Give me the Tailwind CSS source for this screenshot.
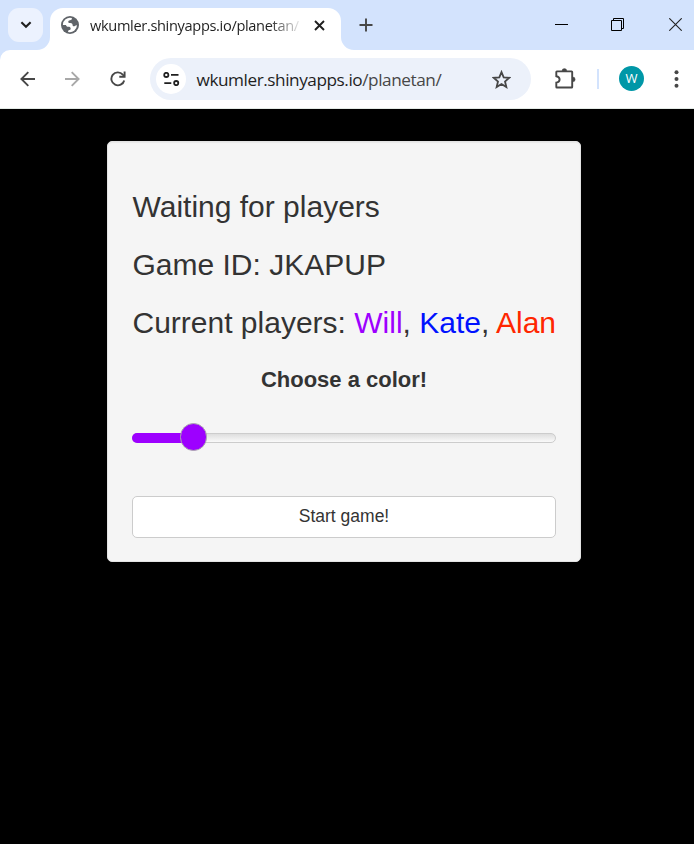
<!DOCTYPE html>
<html lang="en">
<head>
<meta charset="utf-8">
<title>planetan</title>
<script src="https://cdn.jsdelivr.net/npm/@tailwindcss/browser@4"></script>
</head>
<body class="bg-black w-[694px] h-[844px] overflow-hidden flex flex-col font-['Liberation_Sans',Arial,sans-serif] text-[#333]">
<header class="shrink-0 font-['Open_Sans','Noto_Sans',sans-serif]">
  <!-- Tab strip -->
  <div class="h-[50px] bg-[#d3e3fd] flex">
    <div class="w-[50px] flex relative">
      <button class="ml-2 mt-2 w-[35px] h-[34px] rounded-[11px] bg-[#ecf2fe] flex items-center justify-center">
        <svg width="12" height="8" viewBox="0 0 12 8" fill="none" stroke="#1f1f1f" stroke-width="2.1"><path d="M1.4 1.3 6 5.8l4.600-4.500"/></svg>
      </button>
      <svg class="absolute right-0 bottom-0" width="13" height="13" viewBox="0 0 13 13"><path d="M13 0v13H0A13 13 0 0 0 13 0z" fill="#fff"/></svg>
      <svg class="absolute left-0 -bottom-[10px]" width="10" height="10" viewBox="0 0 10 10"><path d="M0 0h10A10 10 0 0 0 0 10z" fill="#d3e3fd"/></svg>
    </div>
    <div class="mt-[8px] h-[42px] w-[290.500px] bg-white rounded-t-[13px] flex items-start pl-[11px]">
      <svg class="mt-[8px] shrink-0" width="18" height="18" viewBox="0 0 18 18"><circle cx="9" cy="9" r="9" fill="#5f6368"/><path d="M10.800 1.900c.4 1.500-.4 2.300-1.800 2.400-1.300.1-1.800.7-1.700 1.700.1.900.8 1.100 2 1.100 1.500 0 2.300.7 2.300 2 0 1.200.9 1.500 1.900 1.100.9-.4 1.600-1 2.500-.9A7.100 7.100 0 0 1 7.200 15.900c-.4-1.300.3-1.900 1.400-2 1-.1 1.200-.8 1-1.700-.2-1-1-1.300-2.300-1.400-1.400-.1-2.200-.7-2.300-1.800H1.900A7.100 7.100 0 0 1 10.800 1.900z" fill="#fff"/></svg>
      <div class="ml-[11px] mt-[6px] w-[210px] h-[22px] leading-[22px] text-[14.600px] tracking-[-0.340px] whitespace-nowrap overflow-hidden text-transparent bg-clip-text bg-linear-to-r from-[#1f1f1f] from-85% to-[#1f1f1f]/10">wkumler.shinyapps.io/planetan/</div>
      <svg class="mt-[12px] ml-[14px] shrink-0" width="11" height="11" viewBox="0 0 11 11" stroke="#1f1f1f" stroke-width="1.900"><path d="M1 1l9 9M10 1l-9 9"/></svg>
    </div>
    <div class="relative w-[49.500px]">
      <svg class="absolute left-0 bottom-0" width="13" height="13" viewBox="0 0 13 13"><path d="M0 0v13h13A13 13 0 0 1 0 0z" fill="#fff"/></svg>
      <svg class="ml-[18.500px] mt-[18px]" width="14" height="14" viewBox="0 0 14 14" stroke="#474747" stroke-width="1.900"><path d="M7 .5v13M.5 7h13"/></svg>
    </div>
    <svg class="ml-[165px] mt-[18px]" width="13" height="13" viewBox="0 0 13 13" stroke="#000"><path d="M0 6.500h13"/></svg>
    <svg class="ml-[43px] mt-[18px]" width="13" height="13" viewBox="0 0 13 13" fill="none" stroke="#000"><path d="M.5 2.500h10v10H.5zM2.500 2.500v-2h10v10h-2"/></svg>
    <svg class="ml-[45px] mt-[18px]" width="13" height="13" viewBox="0 0 13 13" stroke="#222" stroke-width="1.100"><path d="M.3.300l12.400 12.400M12.700.300.300 12.700"/></svg>
  </div>
  <!-- Toolbar -->
  <div class="h-[59px] bg-white border-b border-[#e3eae6] flex items-center pb-[1px]">
    <svg class="ml-5" width="15" height="16" viewBox="0 0 15 16" fill="none" stroke="#474747" stroke-width="1.900"><path d="M15 8H1.600M8.300 1.100 1.400 8l6.900 6.900"/></svg>
    <svg class="ml-[30px]" width="15" height="16" viewBox="0 0 15 16" fill="none" stroke="#a8a8a8" stroke-width="1.900"><path d="M0 8h13.400M6.700 1.100 13.600 8l-6.900 6.900"/></svg>
    <svg class="ml-[30px]" width="16" height="16" viewBox="0 0 16 16" fill="none" stroke="#474747" stroke-width="1.900"><path d="M14.200 9.400A6.500 6.500 0 1 1 12.800 3.600L14.500 5.400"/><path d="M14.600.5v5.300H9.300"/></svg>
    <div class="ml-[24px] w-[381px] h-[42px] mt-[1px] rounded-full bg-[#ecf1fa] flex items-center">
      <div class="ml-[6px] size-[30px] rounded-full bg-white flex items-center justify-center">
        <svg width="17" height="14" viewBox="0 0 17 14" fill="none" stroke="#1f1f1f" stroke-width="1.800"><circle cx="3.300" cy="2.900" r="2.100"/><path d="M8 2.900h7.500M1.300 11.100h7"/><circle cx="13.200" cy="11.100" r="2.100"/></svg>
      </div>
      <div class="ml-[10.500px] mt-[2px] w-[280.500px] text-[17.200px] tracking-[-0.440px] leading-6 text-[#1f1f1f] whitespace-nowrap">wkumler.shinyapps.io<span class="text-[#474747]">/planetan/</span></div>
      <svg class="ml-[15px]" width="19" height="19" viewBox="0 0 20 20" fill="none" stroke="#474747" stroke-width="1.900"><path d="M10 2.200l2.300 5.500 5.900.5-4.500 3.900 1.400 5.800L10 14.800l-5.100 3.100 1.400-5.800L1.800 8.200l5.900-.5z"/></svg>
    </div>
    <svg class="ml-[24px] mb-[1px]" width="21" height="21" viewBox="0 0 21 21"><path d="M1.900 3.400h14.700q.6 0 .6.600v14.900q0 .6-.6.600H1.900q-.6 0-.6-.6v-4.300q3.300-.6 3.300-3.100T1.300 8.300V4q0-.6.6-.6z" fill="none" stroke="#474747" stroke-width="1.900"/><path d="M7 3a2.400 2.400 0 0 1 4.800 0zM17.800 9a2.400 2.400 0 0 1 0 4.800z" fill="#474747" stroke="#474747" stroke-width=".4"/></svg>
    <div class="ml-[21px] w-[2px] h-[20px] bg-[#d3e3fd]"></div>
    <div class="ml-[20px] size-[25px] rounded-full bg-[#0097a7] text-white text-[13px] leading-none flex items-center justify-center">W</div>
    <svg class="ml-[30px]" width="5" height="18" viewBox="0 0 5 18" fill="#474747"><circle cx="2.500" cy="2.200" r="2"/><circle cx="2.500" cy="9" r="2"/><circle cx="2.500" cy="15.800" r="2"/></svg>
  </div>
</header>
<!-- Waiting room panel -->
<main class="ml-[107px] mt-8 w-[474px] h-[421px] shrink-0 bg-[#f5f5f5] border border-[#e3e3e3] rounded-[5px] shadow-[inset_0_1px_1px_rgba(0,0,0,0.05)] px-6 pt-[48px] flex flex-col">
  <div class="flex flex-col gap-[25px] pl-[0.500px] text-[30px] leading-[33px] whitespace-nowrap">
    <h3>Waiting for players</h3>
    <h3>Game ID: JKAPUP</h3>
    <h3>Current players: <span class="text-[#9d00ff]">Will</span>, <span class="text-[#0011ff]">Kate</span>, <span class="text-[#ff2600]">Alan</span></h3>
  </div>
  <label class="mt-[25px] h-[31px] leading-[32px] text-center text-[22px] font-bold">Choose a color!</label>
  <div class="relative mt-[38px] h-[10px] rounded-[5px] border border-[#ccc] bg-linear-to-b from-[#dedede] to-white to-[120%]">
    <div class="absolute -left-px -top-px w-[62px] h-[10px] rounded-l-[5px] bg-[#9d00ff]"></div>
    <div class="absolute left-[47px] -top-[11px] w-[27px] h-[28px] rounded-full border border-[#ababab] bg-[#9d00ff]"></div>
  </div>
  <button class="mt-[53px] h-[42px] border border-[#ccc] rounded-[5px] bg-white text-[17.500px] pb-[2px]">Start game!</button>
</main>
</body>
</html>
